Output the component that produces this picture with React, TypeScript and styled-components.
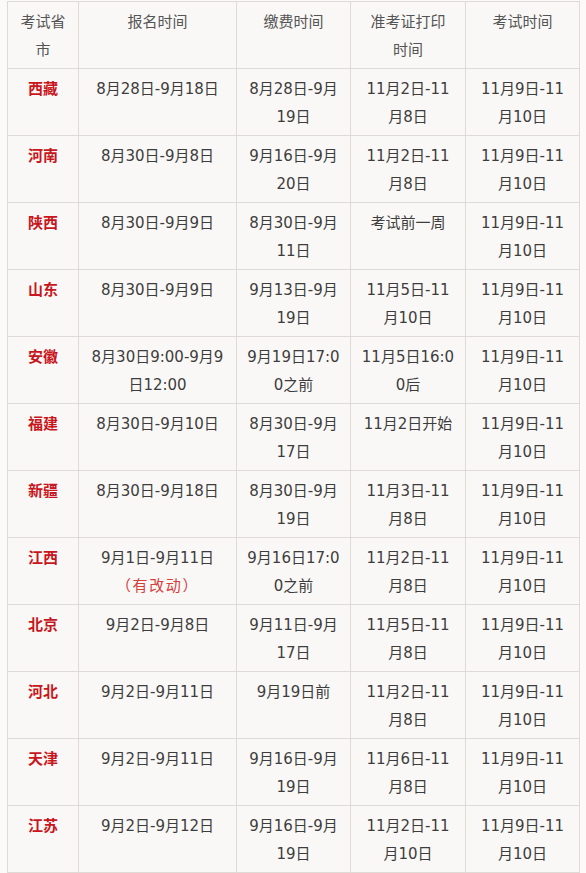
import React from "react";
import styled, { createGlobalStyle } from "styled-components";

const GlobalStyle = createGlobalStyle`
  html, body {
    margin: 0;
    padding: 0;
    background: #fbfaf8;
  }
  body {
    font-family: "DejaVu Sans", "Noto Sans CJK SC", sans-serif;
  }
`;

const Page = styled.div`
  padding: 1px 0 0 7px;
`;

const Table = styled.table`
  border-collapse: collapse;
  table-layout: fixed;
  width: 572px;
  background: #faf8f6;
  font-size: 15px;
  line-height: 28px;
`;

const Cell = styled.td<{ $head?: boolean; $province?: boolean }>`
  border: 1px solid #dedad6;
  padding: 6px 2px 4px;
  height: 56px;
  box-sizing: content-box;
  vertical-align: top;
  text-align: center;
  color: ${(p) => (p.$province ? "#c8161d" : p.$head ? "#555555" : "#3d3d3d")};
  font-weight: ${(p) => (p.$province ? 700 : 400)};
  white-space: nowrap;
`;

const Line = styled.span<{ $note?: boolean }>`
  display: block;
  color: ${(p) => (p.$note ? "#d4403c" : "inherit")};
  letter-spacing: ${(p) => (p.$note ? "1.6px" : "normal")};
`;

type Row = { province: string; cols: string[][]; note?: boolean };

const header: string[][] = [
  ["考试省", "市"],
  ["报名时间"],
  ["缴费时间"],
  ["准考证打印", "时间"],
  ["考试时间"],
];

const rows: Row[] = [
  { province: "西藏", cols: [["8月28日-9月18日"], ["8月28日-9月", "19日"], ["11月2日-11", "月8日"], ["11月9日-11", "月10日"]] },
  { province: "河南", cols: [["8月30日-9月8日"], ["9月16日-9月", "20日"], ["11月2日-11", "月8日"], ["11月9日-11", "月10日"]] },
  { province: "陕西", cols: [["8月30日-9月9日"], ["8月30日-9月", "11日"], ["考试前一周"], ["11月9日-11", "月10日"]] },
  { province: "山东", cols: [["8月30日-9月9日"], ["9月13日-9月", "19日"], ["11月5日-11", "月10日"], ["11月9日-11", "月10日"]] },
  { province: "安徽", cols: [["8月30日9:00-9月9", "日12:00"], ["9月19日17:0", "0之前"], ["11月5日16:0", "0后"], ["11月9日-11", "月10日"]] },
  { province: "福建", cols: [["8月30日-9月10日"], ["8月30日-9月", "17日"], ["11月2日开始"], ["11月9日-11", "月10日"]] },
  { province: "新疆", cols: [["8月30日-9月18日"], ["8月30日-9月", "19日"], ["11月3日-11", "月8日"], ["11月9日-11", "月10日"]] },
  { province: "江西", note: true, cols: [["9月1日-9月11日", "（有改动）"], ["9月16日17:0", "0之前"], ["11月2日-11", "月8日"], ["11月9日-11", "月10日"]] },
  { province: "北京", cols: [["9月2日-9月8日"], ["9月11日-9月", "17日"], ["11月5日-11", "月8日"], ["11月9日-11", "月10日"]] },
  { province: "河北", cols: [["9月2日-9月11日"], ["9月19日前"], ["11月2日-11", "月8日"], ["11月9日-11", "月10日"]] },
  { province: "天津", cols: [["9月2日-9月11日"], ["9月16日-9月", "19日"], ["11月6日-11", "月8日"], ["11月9日-11", "月10日"]] },
  { province: "江苏", cols: [["9月2日-9月12日"], ["9月16日-9月", "19日"], ["11月2日-11", "月10日"], ["11月9日-11", "月10日"]] },
];

const widths = [71, 158, 114, 115, 114];

export default function App() {
  return (
    <>
      <GlobalStyle />
      <Page>
        <Table>
          <colgroup>
            {widths.map((w, i) => (
              <col key={i} style={{ width: w }} />
            ))}
          </colgroup>
          <tbody>
            <tr>
              {header.map((lines, i) => (
                <Cell key={i} $head>
                  {lines.map((l, j) => (
                    <Line key={j}>{l}</Line>
                  ))}
                </Cell>
              ))}
            </tr>
            {rows.map((r) => (
              <tr key={r.province}>
                <Cell $province>
                  <Line>{r.province}</Line>
                </Cell>
                {r.cols.map((lines, i) => (
                  <Cell key={i}>
                    {lines.map((l, j) => (
                      <Line key={j} $note={r.note && i === 0 && j === 1}>
                        {l}
                      </Line>
                    ))}
                  </Cell>
                ))}
              </tr>
            ))}
          </tbody>
        </Table>
      </Page>
    </>
  );
}
